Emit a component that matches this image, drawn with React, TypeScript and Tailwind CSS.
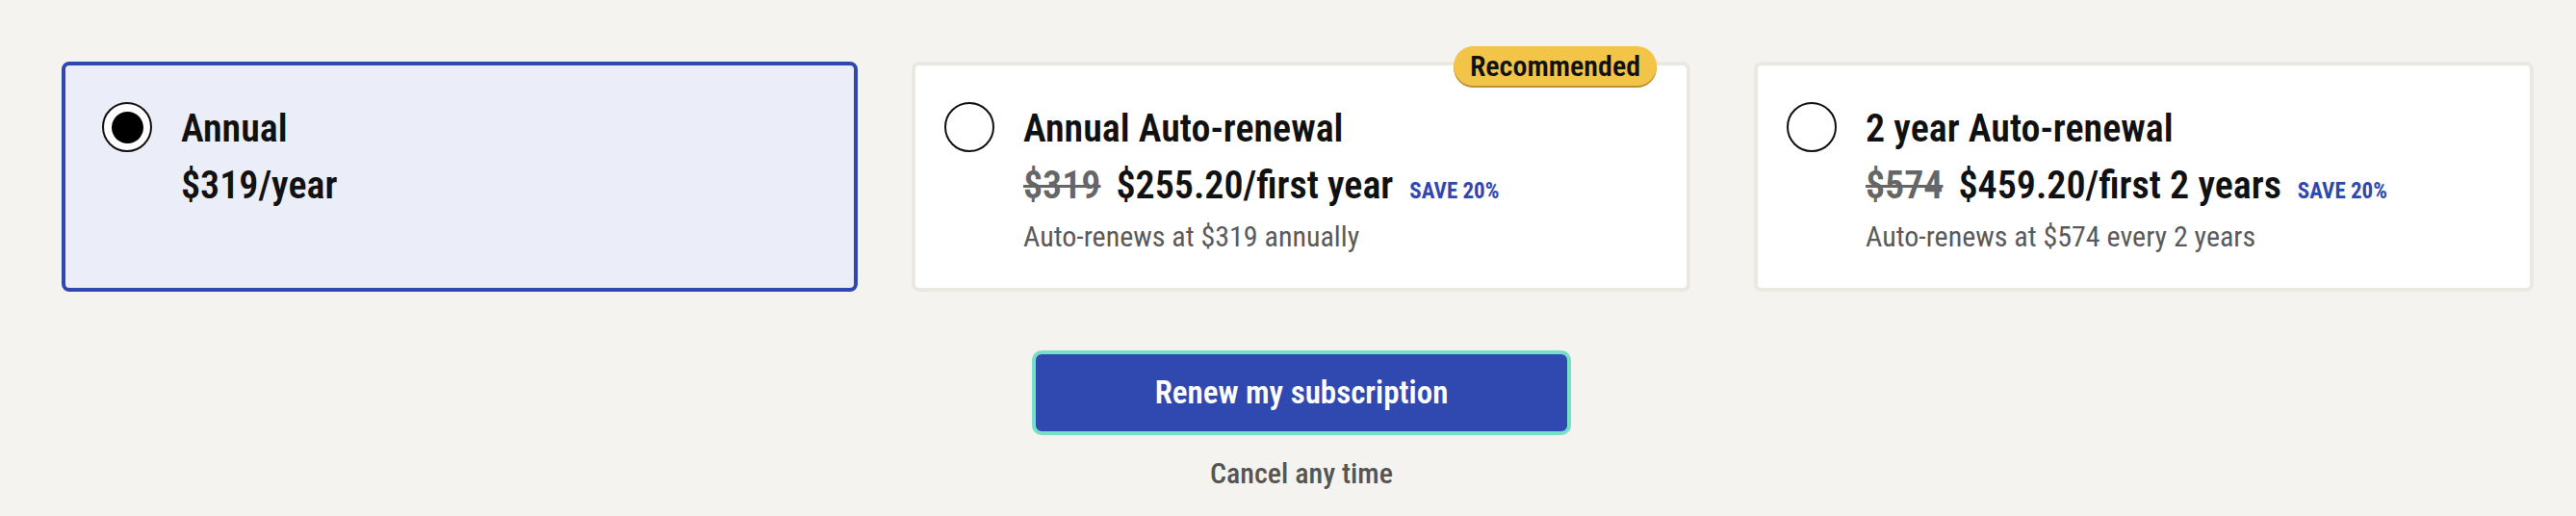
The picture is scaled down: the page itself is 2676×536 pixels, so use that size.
import React from "react";

type Plan = {
  id: string;
  title: string;
  oldPrice?: string;
  price: string;
  save?: string;
  note?: string;
  recommended?: boolean;
};

const plans: Plan[] = [
  { id: "annual", title: "Annual", price: "$319/year" },
  {
    id: "annual-auto",
    title: "Annual Auto-renewal",
    oldPrice: "$319",
    price: "$255.20/first year",
    save: "SAVE 20%",
    note: "Auto-renews at $319 annually",
    recommended: true
  },
  {
    id: "two-year-auto",
    title: "2 year Auto-renewal",
    oldPrice: "$574",
    price: "$459.20/first 2 years",
    save: "SAVE 20%",
    note: "Auto-renews at $574 every 2 years"
  }
];

const font = { fontFamily: '"Liberation Sans Narrow", "Roboto Condensed", "Liberation Sans", sans-serif' };

function Radio({ checked }: { checked: boolean }) {
  return (
    <span className="flex h-[52px] w-[52px] shrink-0 items-center justify-center rounded-full border-2 border-[#111] bg-white">
      {checked && <span className="h-[33px] w-[33px] rounded-full bg-black" />}
    </span>
  );
}

function PlanCard({ plan, selected, className }: { plan: Plan; selected: boolean; className: string }) {
  return (
    <div
      className={`relative flex h-[239px] shrink-0 rounded-[8px] border-4 pt-[38px] ${
        selected ? "border-[#2f48b1] bg-[#ebedf8] pl-[38px]" : "border-[#ebe8e1] bg-white pl-[30px]"
      } ${className}`}
    >
      {plan.recommended && (
        <span className="absolute -top-[20px] right-[31px] flex h-[41px] w-[211px] items-center justify-center rounded-full bg-[#f2c548] text-[30px] font-semibold text-[#111] shadow-[0_2px_0_#b8932f]">
          Recommended
        </span>
      )}
      <Radio checked={selected} />
      <div className="ml-[30px] mt-[2px] flex flex-col">
        <h3 className="text-[40px] font-semibold leading-[52px] text-[#111]">{plan.title}</h3>
        <div className="mt-[7px] flex items-baseline leading-[52px]">
          {plan.oldPrice && (
            <span className="mr-[16px] text-[40px] font-semibold text-[#666] line-through decoration-[3px]">{plan.oldPrice}</span>
          )}
          <span className="text-[40px] font-semibold text-[#111]">{plan.price}</span>
          {plan.save && (
            <span className="ml-[17px] text-[23px] font-bold text-[#2f48b1]">{plan.save}</span>
          )}
        </div>
        {plan.note && <p className="mt-[1px] text-[30px] leading-[40px] text-[#5a5a5a]">{plan.note}</p>}
      </div>
    </div>
  );
}

export default function App() {
  return (
    <div className="h-[536px] w-[2676px] bg-[#f4f3ef] pl-16 pt-16" style={font}>
      <div className="flex">
        <PlanCard plan={plans[0]} selected className="w-[827px]" />
        <PlanCard plan={plans[1]} selected={false} className="ml-[56px] w-[809px]" />
        <PlanCard plan={plans[2]} selected={false} className="ml-[66px] w-[810px]" />
      </div>
      <div className="ml-2 flex w-[2560px] flex-col items-center">
        <button className="mt-[61px] flex h-[88px] w-[560px] items-center justify-center rounded-[10px] border-4 border-[#74e0c6] bg-[#2f49b1] text-[33px] font-semibold text-white">
          Renew my subscription
        </button>
        <p className="mt-[22px] text-[30px] font-medium leading-[36px] text-[#555]">Cancel any time</p>
      </div>
    </div>
  );
}
